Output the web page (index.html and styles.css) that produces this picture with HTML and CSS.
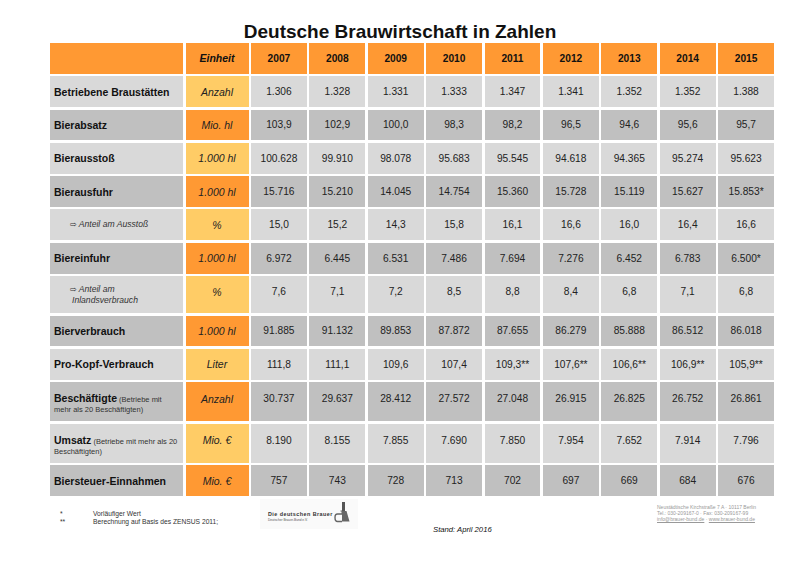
FILE: index.html
```html
<!DOCTYPE html>
<html lang="de">
<head>
<meta charset="utf-8">
<title>Deutsche Brauwirtschaft in Zahlen</title>
<link rel="stylesheet" href="styles.css">
</head>
<body>
<div class="page">
  <h1 class="title">Deutsche Brauwirtschaft in Zahlen</h1>
  <div class="table">
    <div class="row head">
      <div class="cell label"></div><div class="cell unit">Einheit</div>
      <div class="cell">2007</div><div class="cell">2008</div><div class="cell">2009</div><div class="cell">2010</div><div class="cell">2011</div><div class="cell">2012</div><div class="cell">2013</div><div class="cell">2014</div><div class="cell">2015</div>
    </div>
    <div class="row light">
      <div class="cell label">Betriebene Braustätten</div><div class="cell unit">Anzahl</div>
      <div class="cell">1.306</div><div class="cell">1.328</div><div class="cell">1.331</div><div class="cell">1.333</div><div class="cell">1.347</div><div class="cell">1.341</div><div class="cell">1.352</div><div class="cell">1.352</div><div class="cell">1.388</div>
    </div>
    <div class="row dark">
      <div class="cell label">Bierabsatz</div><div class="cell unit">Mio. hl</div>
      <div class="cell">103,9</div><div class="cell">102,9</div><div class="cell">100,0</div><div class="cell">98,3</div><div class="cell">98,2</div><div class="cell">96,5</div><div class="cell">94,6</div><div class="cell">95,6</div><div class="cell">95,7</div>
    </div>
    <div class="row light">
      <div class="cell label">Bierausstoß</div><div class="cell unit">1.000 hl</div>
      <div class="cell">100.628</div><div class="cell">99.910</div><div class="cell">98.078</div><div class="cell">95.683</div><div class="cell">95.545</div><div class="cell">94.618</div><div class="cell">94.365</div><div class="cell">95.274</div><div class="cell">95.623</div>
    </div>
    <div class="row dark">
      <div class="cell label">Bierausfuhr</div><div class="cell unit">1.000 hl</div>
      <div class="cell">15.716</div><div class="cell">15.210</div><div class="cell">14.045</div><div class="cell">14.754</div><div class="cell">15.360</div><div class="cell">15.728</div><div class="cell">15.119</div><div class="cell">15.627</div><div class="cell">15.853*</div>
    </div>
    <div class="row light">
      <div class="cell label sub"><span class="subtext"><span class="arrow">⇨</span> Anteil am Ausstoß</span></div><div class="cell unit">%</div>
      <div class="cell">15,0</div><div class="cell">15,2</div><div class="cell">14,3</div><div class="cell">15,8</div><div class="cell">16,1</div><div class="cell">16,6</div><div class="cell">16,0</div><div class="cell">16,4</div><div class="cell">16,6</div>
    </div>
    <div class="row dark">
      <div class="cell label">Biereinfuhr</div><div class="cell unit">1.000 hl</div>
      <div class="cell">6.972</div><div class="cell">6.445</div><div class="cell">6.531</div><div class="cell">7.486</div><div class="cell">7.694</div><div class="cell">7.276</div><div class="cell">6.452</div><div class="cell">6.783</div><div class="cell">6.500*</div>
    </div>
    <div class="row light tall">
      <div class="cell label sub"><span class="subtext"><span class="arrow">⇨</span> Anteil am<br>Inlandsverbrauch</span></div><div class="cell unit">%</div>
      <div class="cell">7,6</div><div class="cell">7,1</div><div class="cell">7,2</div><div class="cell">8,5</div><div class="cell">8,8</div><div class="cell">8,4</div><div class="cell">6,8</div><div class="cell">7,1</div><div class="cell">6,8</div>
    </div>
    <div class="row dark">
      <div class="cell label">Bierverbrauch</div><div class="cell unit">1.000 hl</div>
      <div class="cell">91.885</div><div class="cell">91.132</div><div class="cell">89.853</div><div class="cell">87.872</div><div class="cell">87.655</div><div class="cell">86.279</div><div class="cell">85.888</div><div class="cell">86.512</div><div class="cell">86.018</div>
    </div>
    <div class="row light">
      <div class="cell label">Pro-Kopf-Verbrauch</div><div class="cell unit">Liter</div>
      <div class="cell">111,8</div><div class="cell">111,1</div><div class="cell">109,6</div><div class="cell">107,4</div><div class="cell">109,3**</div><div class="cell">107,6**</div><div class="cell">106,6**</div><div class="cell">106,9**</div><div class="cell">105,9**</div>
    </div>
    <div class="row dark tall">
      <div class="cell label"><div class="multi"><div class="mline"><span class="lead">Beschäftigte</span> <small>(Betriebe mit</small></div><div class="mline"><small>mehr als 20 Beschäftigten)</small></div></div></div><div class="cell unit">Anzahl</div>
      <div class="cell">30.737</div><div class="cell">29.637</div><div class="cell">28.412</div><div class="cell">27.572</div><div class="cell">27.048</div><div class="cell">26.915</div><div class="cell">26.825</div><div class="cell">26.752</div><div class="cell">26.861</div>
    </div>
    <div class="row light tall">
      <div class="cell label"><div class="multi"><div class="mline"><span class="lead">Umsatz</span> <small>(Betriebe mit mehr als 20</small></div><div class="mline"><small>Beschäftigten)</small></div></div></div><div class="cell unit">Mio. €</div>
      <div class="cell">8.190</div><div class="cell">8.155</div><div class="cell">7.855</div><div class="cell">7.690</div><div class="cell">7.850</div><div class="cell">7.954</div><div class="cell">7.652</div><div class="cell">7.914</div><div class="cell">7.796</div>
    </div>
    <div class="row dark">
      <div class="cell label">Biersteuer-Einnahmen</div><div class="cell unit">Mio. €</div>
      <div class="cell">757</div><div class="cell">743</div><div class="cell">728</div><div class="cell">713</div><div class="cell">702</div><div class="cell">697</div><div class="cell">669</div><div class="cell">684</div><div class="cell">676</div>
    </div>
  </div>

  <div class="footer">
    <div class="notes">
      <span class="star">*</span><span>Vorläufiger Wert</span>
      <span class="star">**</span><span>Berechnung auf Basis des ZENSUS 2011;</span>
    </div>
    <div class="logo">
      <div class="logo-text">
        <div class="logo-name">Die deutschen Brauer</div>
        <div class="logo-sub">Deutscher Brauer-Bund e.V.</div>
      </div>
      <svg class="logo-icon" width="18" height="21" viewBox="0 0 18 21">
        <rect x="9" y="0" width="3" height="9" fill="#555"/>
        <path d="M7.5 9 H13.5 L16.5 19.5 H9 V9 Z" fill="#666"/>
        <path d="M9 12 H4.5 Q2 12 2 15.5 Q2 19.5 4.5 19.5 H9" fill="none" stroke="#666" stroke-width="1.4"/>
        <path d="M7.5 9 L9 9 L9 12" fill="none" stroke="#666" stroke-width="1"/>
      </svg>
    </div>
    <div class="stand">Stand: April 2016</div>
    <div class="address">
      <div>Neustädtische Kirchstraße 7 A · 10117 Berlin</div>
      <div>Tel.: 030-209167-0 · Fax: 030-209167-99</div>
      <div><span class="link">info@brauer-bund.de</span> · <span class="link">www.brauer-bund.de</span></div>
    </div>
  </div>
</div>
</body>
</html>
```

FILE: styles.css
```css
html, body {
  margin: 0;
  padding: 0;
  background: #ffffff;
}

body {
  font-family: "Liberation Sans", Arial, sans-serif;
  color: #222;
  width: 800px;
  height: 566px;
  overflow: hidden;
}

.page {
  width: 800px;
}

.title {
  margin: 0;
  padding-top: 20px;
  height: 23px;
  font-size: 19px;
  line-height: 23px;
  font-weight: bold;
  text-align: center;
  color: #111;
}

.table {
  display: grid;
  width: 724px;
  margin-left: 50px;
  grid-template-columns: 133px 63px repeat(9, 1fr);
  grid-template-rows: repeat(7, 30.8px) 37px 30.8px 30.8px 39px 39px 30.8px;
  column-gap: 2.5px;
  row-gap: 2.5px;
}

.row {
  display: contents;
}

.cell {
  display: flex;
  align-items: center;
  justify-content: center;
  font-size: 10.2px;
  color: #222;
  white-space: nowrap;
}

.head .cell {
  background: #ff9933;
  font-weight: bold;
  color: #111;
}

.light .cell {
  background: #d9d9d9;
}

.dark .cell {
  background: #c0c0c0;
}

.light .unit {
  background: #ffcc66;
}

.dark .unit {
  background: #ff9933;
}

.unit {
  font-style: italic;
  font-size: 10.5px;
}

.head .unit {
  font-weight: bold;
  font-style: italic;
}

.label {
  justify-content: flex-start;
  padding-left: 4px;
  font-weight: bold;
  font-size: 10.5px;
  color: #111;
}

.tall .cell {
  padding-bottom: 6px;
}

.tall .label {
  padding-bottom: 0;
}

.sub {
  font-weight: normal;
}

.subtext {
  display: block;
  font-style: italic;
  font-size: 8.6px;
  line-height: 10px;
  color: #333;
  padding-left: 18px;
  text-indent: -2px;
  white-space: normal;
}

.arrow {
  font-family: "DejaVu Sans", sans-serif;
  font-style: normal;
  font-size: 8px;
}

.multi {
  display: flex;
  flex-direction: column;
  padding-top: 5px;
  font-size: 7.5px;
}

.mline {
  line-height: 10px;
  white-space: nowrap;
}

.multi .lead {
  font-size: 10.5px;
  line-height: 10px;
}

.multi small {
  font-weight: normal;
  font-size: 7.5px;
  color: #333;
}

.footer {
  display: flex;
  align-items: flex-start;
  height: 69px;
}

.notes {
  display: grid;
  grid-template-columns: 33px auto;
  margin-left: 60px;
  width: 200px;
  padding-top: 14px;
  font-size: 6.7px;
  line-height: 8.4px;
  color: #333;
}

.star {
  font-size: 6.7px;
}

.logo {
  display: flex;
  align-items: flex-start;
  width: 98px;
  height: 30px;
  margin-top: 3px;
  background: #fafafa;
  box-sizing: border-box;
  padding: 3px 0 0 8px;
}

.logo-text {
  padding-top: 9px;
  width: 65px;
}

.logo-name {
  font-size: 5.4px;
  font-weight: bold;
  letter-spacing: 0.45px;
  color: #333;
  line-height: 7px;
  white-space: nowrap;
}

.logo-sub {
  font-size: 3.2px;
  color: #555;
  line-height: 5px;
  white-space: nowrap;
}

.logo-icon {
  display: block;
  margin-left: 0;
}

.stand {
  margin-left: 75px;
  width: 224px;
  padding-top: 29px;
  font-size: 7.7px;
  font-style: italic;
  color: #111;
}

.address {
  padding-top: 8px;
  font-size: 5px;
  line-height: 6.2px;
  color: #999;
  white-space: nowrap;
}

.link {
  text-decoration: underline;
}
```
